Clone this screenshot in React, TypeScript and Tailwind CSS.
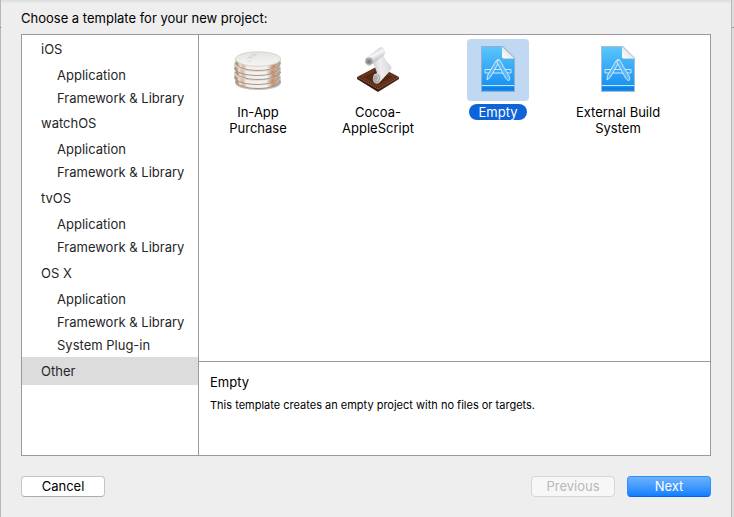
import { useState } from "react";

const groups = [
    { name: "iOS", items: ["Application", "Framework & Library"] },
    { name: "watchOS", items: ["Application", "Framework & Library"] },
    { name: "tvOS", items: ["Application", "Framework & Library"] },
    {
        name: "OS X",
        items: ["Application", "Framework & Library", "System Plug-in"],
    },
    { name: "Other", items: [] },
];

const CoinsIcon = () => (
    <svg viewBox="0 0 62 62" className="size-[62px]" aria-hidden="true">
        <defs>
            <linearGradient id="coin-edge">
                <stop offset="0" stopColor="#a8a098" />
                <stop offset="0.05" stopColor="#c98f68" />
                <stop offset="0.1" stopColor="#f3dfd0" />
                <stop offset="0.17" stopColor="#dcb296" />
                <stop offset="0.26" stopColor="#f6ece4" />
                <stop offset="0.7" stopColor="#f7f0ea" />
                <stop offset="0.84" stopColor="#c98c64" />
                <stop offset="0.92" stopColor="#d6a586" />
                <stop offset="1" stopColor="#a8a098" />
            </linearGradient>
            <linearGradient id="coin-top" x2="0" y2="1">
                <stop offset="0" stopColor="#e2e4e0" />
                <stop offset="1" stopColor="#f6f6f4" />
            </linearGradient>
        </defs>
        <ellipse cx="31" cy="44" rx="23" ry="7" fill="#c4c4c4" />
        {[
            [31, 38],
            [30, 34],
            [31, 29],
            [30, 25],
            [31, 20],
        ].map(([cx, cy]) => (
            <g key={cy}>
                <path
                    d={`M${cx - 22.5} ${cy}v4c0 4 10 7.500 22.500 7.500s22.500-3.500 22.500-7.500v-4z`}
                    fill="url(#coin-edge)"
                />
                <path
                    d={`M${cx - 22.5} ${cy + 4}c0 4 10 7.500 22.500 7.500s22.500-3.500 22.500-7.500`}
                    fill="none"
                    stroke="#8f9290"
                    strokeWidth="0.9"
                />
                <ellipse
                    cx={cx}
                    cy={cy}
                    rx="22.5"
                    ry="7.2"
                    fill="url(#coin-top)"
                    stroke="#d3d5d1"
                    strokeWidth="1"
                />
            </g>
        ))}
        <path
            d="M20 20l2-2 2 1 1-3 3-1M22 23l2-2M27 17l3-2"
            fill="none"
            stroke="#c9ccc7"
            strokeWidth="0.8"
        />
    </svg>
);

const ScriptIcon = () => (
    <svg viewBox="0 0 62 62" className="size-[62px]" aria-hidden="true">
        <defs>
            <linearGradient id="scroll-body" x1="0" y1="0.6" x2="1" y2="0.3">
                <stop offset="0" stopColor="#c6c4c8" />
                <stop offset="0.45" stopColor="#eeedef" />
                <stop offset="1" stopColor="#d6d4d8" />
            </linearGradient>
            <linearGradient id="scroll-roll" x1="0.3" y1="0.2" x2="0.65" y2="0.8">
                <stop offset="0" stopColor="#c9c8cb" />
                <stop offset="0.4" stopColor="#f7f7f8" />
                <stop offset="1" stopColor="#b3b2b6" />
            </linearGradient>
        </defs>
        <path d="M10 38L31 27l21 11-21 12z" fill="#5e2f19" />
        <path d="M10 38l21 12v3L10 40z" fill="#3a190c" />
        <path d="M52 38L31 50v3l21-13z" fill="#4a2211" />
        <path
            d="M15 38l16-8 16 8-16 9z"
            fill="#552814"
            stroke="#7b4427"
            strokeWidth="0.7"
        />
        <path
            d="M25 23L36 15c1 4 4 8 7 11 2 2 2 4 0 6L32 44c-3 2-7-1-6-5 0-2 2-4 4-5-1-4-3-8-5-11z"
            fill="url(#scroll-body)"
        />
        <path
            d="M26 38c0-3 3-4 5-3s3 4 1 8c-2 3-7 0-6-5z"
            fill="#adabb0"
        />
        <path
            d="M27 36c3-2 6 2 3 6M31 35l9-9"
            fill="none"
            stroke="#e9e8eb"
            strokeWidth="0.8"
        />
        <path
            d="M19 19L32 9c3-2 6 0 6 4 0 2-1 3-2 4L24 26c-3 2-6-1-6-4 0-1 0-2 1-3z"
            fill="url(#scroll-roll)"
        />
        <ellipse cx="22" cy="22" rx="3.8" ry="3.6" fill="#a3a2a6" />
        <path d="M20 23c0-3 4-3 4 0-1 2-3 2-4 0" fill="#807f84" />
    </svg>
);

const ProjectIcon = () => (
    <svg viewBox="0 0 62 62" className="size-[62px]" aria-hidden="true">
        <defs>
            <linearGradient id="doc-fill" x2="0" y2="1">
                <stop offset="0" stopColor="#5ac6fb" />
                <stop offset="1" stopColor="#138bf0" />
            </linearGradient>
            <linearGradient id="doc-fold" x1="0" y1="1" x2="1" y2="0">
                <stop offset="0" stopColor="#ffffff" />
                <stop offset="0.5" stopColor="#e9e9e9" />
            </linearGradient>
        </defs>
        <path d="M14 7h22l12 12v34H14z" fill="#6f93b4" opacity="0.6" />
        <path d="M15 8h20v11.500h12V52H15z" fill="url(#doc-fill)" />
        <path d="M35 7.500L47.500 19.500H37q-2 0-2-2z" fill="url(#doc-fold)" />
        <path d="M15 46.500h32" stroke="#c5e8fe" />
        <path d="M15 49.500h32" stroke="#0e7de4" strokeWidth="2" />
        <g fill="#5eb8f6" stroke="#c9ebfd" strokeWidth="1">
            <path d="M18 30.500h26v3.500H18z" fill="#3ba6f5" />
            <path d="M29 22l2-2 1.500 2-9 16-3.500 3 .5-4.500z" />
            <path d="M29.500 22.500l3-1.500 9.500 16c1 2 1 4 0 4.500s-3-1.500-4-3.500z" />
        </g>
    </svg>
);

const templates = [
    { name: "In-App Purchase", Icon: CoinsIcon },
    { name: "Cocoa-AppleScript", Icon: ScriptIcon },
    { name: "Empty", Icon: ProjectIcon },
    { name: "External Build System", Icon: ProjectIcon },
];

const Sidebar = () => (
    <nav className="w-[177px] shrink-0 border-r border-[#9a9a9a] text-[#262626]">
        {groups.map(({ name, items }) => (
            <div key={name} className="not-first:mb-px">
                <button
                    className={`block h-7 w-full pl-[19px] text-left ${name === "Other" ? "bg-[#dcdcdc]" : ""}`}
                >
                    {name}
                </button>
                {items.map((item) => (
                    <button
                        key={item}
                        className="block h-[23px] w-full pl-[35px] text-left"
                    >
                        {item}
                    </button>
                ))}
            </div>
        ))}
    </nav>
);

export default function App() {
    const [selected, setSelected] = useState("Empty");

    return (
        <div className="flex min-h-screen bg-[#eeeeee] font-['Inter','Liberation_Sans',sans-serif] text-[13px] leading-4 text-black">
            <div className="w-px shrink-0 bg-[#b8b8b8] pt-[27px]">
                <div className="h-px bg-[#808080]" />
            </div>
            <main className="flex min-w-0 grow flex-col bg-linear-to-b from-[#dcdcdc] to-[#eeeeee] to-[4px] px-5 pt-2.5 pb-5">
                <h1 className="mb-2">Choose a template for your new project:</h1>
                <div className="flex grow border border-[#9a9a9a] bg-white">
                    <Sidebar />
                    <div className="flex min-w-0 grow flex-col">
                        <div className="flex grow flex-wrap items-start gap-x-0.5 pt-1">
                            {templates.map(({ name, Icon }) => (
                                <button
                                    key={name}
                                    onClick={() => setSelected(name)}
                                    className="flex w-[118px] flex-col items-center gap-[3px]"
                                >
                                    <span
                                        className={`rounded ${selected === name ? "bg-[#c1d8f2]" : ""}`}
                                    >
                                        <Icon />
                                    </span>
                                    <span
                                        className={`max-w-[108px] rounded-full px-2.5 ${selected === name ? "bg-[#0e63d9] text-white" : ""}`}
                                    >
                                        {name}
                                    </span>
                                </button>
                            ))}
                        </div>
                        <section className="h-[94px] border-t border-[#9a9a9a] px-[11px] pt-3">
                            <h2 className="mb-[7px]">Empty</h2>
                            <p className="text-[11px]">
                                This template creates an empty project with no
                                files or targets.
                            </p>
                        </section>
                    </div>
                </div>
                <footer className="mt-5 flex gap-3">
                    <button className="mr-auto flex h-[21px] w-[84px] justify-center rounded border border-[#c4c4c4] border-b-[#acacac] bg-white pt-px">
                        Cancel
                    </button>
                    <button
                        disabled
                        className="flex h-[21px] w-[84px] justify-center rounded border border-[#d6d6d6] bg-[#f7f7f7] pt-px text-[#b9b9b9]"
                    >
                        Previous
                    </button>
                    <button className="flex h-[21px] w-[84px] justify-center rounded border border-[#2f8ef8] border-b-[#0763e8] bg-linear-to-b from-[#6bb3fa] to-[#097eff] pt-px text-white">
                        Next
                    </button>
                </footer>
            </main>
            <div className="w-[3px] shrink-0 border-l border-[#b8b8b8] bg-[#dedede] pt-[27px]">
                <div className="h-px bg-[#999999]" />
            </div>
        </div>
    );
}
